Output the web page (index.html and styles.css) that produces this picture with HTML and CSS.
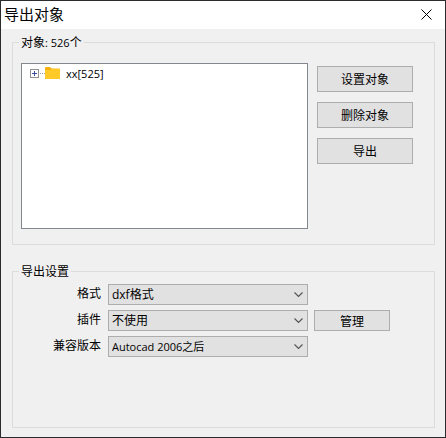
FILE: index.html
```html
<!DOCTYPE html>
<html lang="zh-CN">
<head>
    <meta charset="UTF-8">
    <meta name="viewport" content="width=device-width, initial-scale=1.0">
    <title>导出对象</title>
    <link rel="stylesheet" href="styles.css">
</head>
<body>
    <div class="window">
        <header class="title-bar">
            <h1>导出对象</h1>
            <button type="button" class="close" aria-label="关闭">
                <svg width="11" height="11" viewBox="0 0 11 11">
                    <path d="M0.5 0.5L10.5 10.5M10.5 0.5L0.5 10.5" stroke="#000" fill="none"/>
                </svg>
            </button>
        </header>
        <form class="content">
            <fieldset class="group objects">
                <legend>对象<span class="count">: 526</span>个</legend>
                <div class="objects-row">
                    <ul class="tree">
                        <li>
                            <button type="button" class="expander" aria-label="展开">
                                <svg width="15" height="9" viewBox="0 0 15 9">
                                    <rect x="0.5" y="0.5" width="8" height="8" fill="#fff" stroke="#919191"/>
                                    <path d="M2 4.5H7M4.5 2V7" stroke="#3a4f9a"/>
                                    <path d="M10 4.5H15" stroke="#a0a0a0" stroke-dasharray="1 1"/>
                                </svg>
                            </button>
                            <svg class="folder" width="15" height="12" viewBox="0 0 15 12">
                                <path d="M0 1Q0 0 1 0H5L6.5 1.5H14Q15 1.5 15 2.5V11Q15 12 14 12H1Q0 12 0 11Z" fill="#f5b10f"/>
                                <path d="M0 3H5.5L7 2H14.5Q15 2 15 3V11Q15 12 14 12H1Q0 12 0 11Z" fill="#ffca28"/>
                            </svg>
                            <span>xx[525]</span>
                        </li>
                    </ul>
                    <div class="actions">
                        <button type="button" class="btn">设置对象</button>
                        <button type="button" class="btn">删除对象</button>
                        <button type="button" class="btn">导出</button>
                    </div>
                </div>
            </fieldset>
            <fieldset class="group settings">
                <legend>导出设置</legend>
                <div class="settings-grid">
                    <label for="format">格式</label>
                    <select id="format">
                        <option>dxf格式</option>
                    </select>
                    <label for="plugin">插件</label>
                    <select id="plugin">
                        <option>不使用</option>
                    </select>
                    <button type="button" class="btn manage">管理</button>
                    <label for="version">兼容版本</label>
                    <select id="version" class="small">
                        <option>Autocad 2006之后</option>
                    </select>
                </div>
            </fieldset>
        </form>
    </div>
</body>
</html>
```
FILE: styles.css
```css
* {
    box-sizing: border-box;
}

body {
    margin: 0;
    font-family: "Open Sans", "Noto Sans CJK SC", sans-serif;
    font-size: 12px;
    color: #000;
    background-color: #f0f0f0;
}

button,
select {
    font-family: inherit;
    font-size: inherit;
    color: inherit;
}

.window {
    display: flex;
    flex-direction: column;
    min-height: 100vh;
    border: 1px solid #2b2b2e;
}

.title-bar {
    display: flex;
    justify-content: space-between;
    align-items: center;
    height: 28px;
    padding: 0 13px 2px 3px;
    background-color: #fff;
}

.title-bar h1 {
    margin: 0;
    font-size: 15px;
    font-weight: normal;
    line-height: 26px;
}

.close {
    display: flex;
    padding: 0;
    border: none;
    background: none;
}

.content {
    display: flex;
    flex: 1;
    flex-direction: column;
    gap: 18px;
    padding: 5px 10px 9px 11px;
}

.group {
    min-width: 0;
    margin: 0;
    border: 1px solid #dcdcdc;
}

.group legend {
    padding: 0 2px;
    line-height: 17px;
}

.objects {
    padding: 12px 21px 15px 6px;
}

.count {
    font-size: 11px;
}

.objects-row {
    display: flex;
    gap: 9px;
    padding-left: 2px;
}

.tree {
    flex: 1;
    min-height: 166px;
    margin: 0;
    padding: 0 8px;
    border: 1px solid #828790;
    background-color: #fff;
    list-style: none;
}

.tree li {
    display: flex;
    align-items: center;
    height: 18px;
    font-size: 11px;
}

.expander {
    display: flex;
    padding: 0;
    border: none;
    background: none;
}

.folder {
    margin-right: 6px;
}

.actions {
    display: flex;
    flex-direction: column;
    gap: 10px;
    width: 96px;
    padding-top: 3px;
}

.btn {
    height: 26px;
    padding: 0;
    border: 1px solid #adadad;
    background-color: #e1e1e1;
}

.settings {
    flex: 1;
    padding: 4px 21px 9px 6px;
}

.settings-grid {
    display: grid;
    grid-template-columns: 83px 200px 76px;
    column-gap: 6px;
    row-gap: 5px;
}

.settings-grid label {
    grid-column: 1;
    padding-right: 1px;
    line-height: 19px;
    text-align: right;
}

.settings-grid select {
    height: 21px;
    padding: 0 20px 0 3px;
    border: 1px solid #adadad;
    border-radius: 0;
    appearance: none;
    background: #e1e1e1 url("data:image/svg+xml,%3Csvg xmlns='http://www.w3.org/2000/svg' width='9' height='6'%3E%3Cpath d='M0.5 0.5L4.5 4.5L8.5 0.5' fill='none' stroke='%23555' stroke-width='1.2'/%3E%3C/svg%3E") no-repeat right 4px center;
}

.settings-grid .small {
    font-size: 11px;
}

.manage {
    height: 21px;
}
```
